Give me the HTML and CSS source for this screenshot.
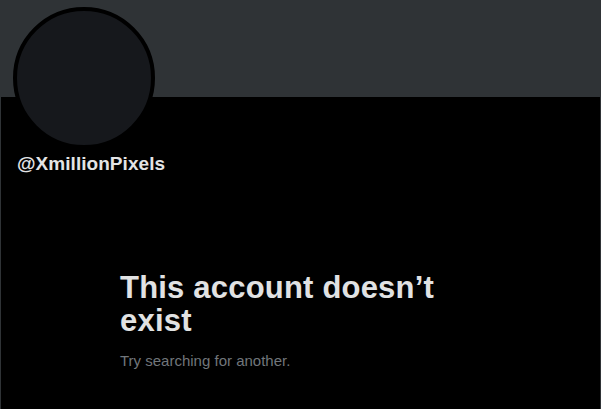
FILE: index.html
```html
<!DOCTYPE html>
<html lang="en">
<head>
<meta charset="utf-8">
<title>@XmillionPixels</title>
<link rel="stylesheet" href="styles.css">
</head>
<body>
<div class="column">
  <div class="banner"></div>
  <div class="profile">
    <div class="avatar"></div>
    <div class="handle">@XmillionPixels</div>
  </div>
  <div class="empty">
    <h2 class="empty-title">This account doesn’t exist</h2>
    <p class="empty-text">Try searching for another.</p>
  </div>
</div>
</body>
</html>
```
FILE: styles.css
```css
html, body {
  margin: 0;
  padding: 0;
  background: #000;
  height: 100%;
}
body {
  font-family: "Liberation Sans", Arial, sans-serif;
  color: #e7e9ea;
  overflow: hidden;
}
.column {
  box-sizing: border-box;
  width: 601px;
  height: 409px;
  border-left: 1px solid #2f3336;
  border-right: 1px solid #2f3336;
}
.banner {
  height: 97px;
  background: #2f3336;
}
.profile {
  padding-left: 12px;
  display: flex;
  flex-direction: column;
  align-items: flex-start;
}
.avatar {
  width: 134px;
  height: 134px;
  border: 4px solid #000;
  border-radius: 50%;
  background: #16181c;
  margin-top: -90px;
}
.handle {
  margin-top: 3px;
  padding-left: 4px;
  font-size: 19px;
  line-height: 24px;
  font-weight: 700;
  letter-spacing: 0.05px;
  color: #e3e4e5;
}
.empty {
  margin-top: 95px;
  padding-left: 119px;
  max-width: 336px;
}
.empty-title {
  margin: 0;
  font-size: 31px;
  line-height: 33px;
  font-weight: 700;
  letter-spacing: 0.2px;
  color: #e1e2e3;
}
.empty-text {
  margin: 14px 0 0;
  font-size: 15px;
  line-height: 20px;
  color: #71767b;
}
```
